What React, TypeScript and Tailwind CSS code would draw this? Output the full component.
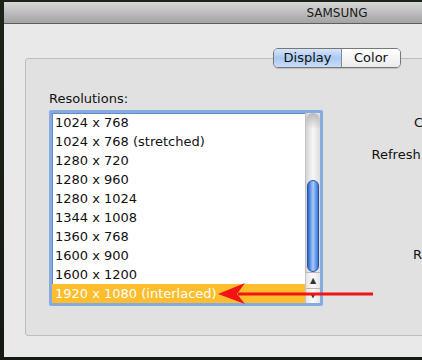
import React from 'react';

const RESOLUTIONS = [
  '1024 x 768',
  '1024 x 768 (stretched)',
  '1280 x 720',
  '1280 x 960',
  '1280 x 1024',
  '1344 x 1008',
  '1360 x 768',
  '1600 x 900',
  '1600 x 1200',
  '1920 x 1080 (interlaced)',
];

const SELECTED = 9;

const Scrollbar: React.FC = () => (
  <div className="flex w-[15px] shrink-0 flex-col border-l border-[#c4c4c4]">
    {/* track */}
    <div className="relative flex-1 bg-gradient-to-r from-[#d4d4d4] via-[#f7f7f7] to-[#dcdcdc]">
      <div className="h-[16px] rounded-t-[7px] bg-gradient-to-b from-[#b9b9b9] to-transparent" />
      <div className="absolute left-[1px] right-[1px] top-[67px] h-[92px] rounded-[7px] border border-[#2553a8] bg-gradient-to-r from-[#2a63cc] via-[#a5ccf7] to-[#3c75da]" />
    </div>
    {/* arrows */}
    <div className="flex h-[16px] items-center justify-center border-t border-[#b8b8b8] bg-gradient-to-r from-[#e6e6e6] via-[#fafafa] to-[#e6e6e6] text-[8px] leading-none text-[#333]">
      ▲
    </div>
    <div className="flex h-[15px] items-center justify-center border-t border-[#b8b8b8] bg-gradient-to-r from-[#e6e6e6] via-[#fafafa] to-[#e6e6e6] text-[5px] leading-none text-[#333]">
      ▼
    </div>
  </div>
);

export default function App() {
  return (
    <div
      className="relative h-[360px] w-[422px] overflow-hidden bg-gradient-to-b from-[#1c2418] to-[#141a12] pl-[4px] pt-[2px] text-[13px] leading-[16px] text-[#111]"
      style={{ fontFamily: '"DejaVu Sans", "Noto Sans", sans-serif' }}
    >
      <div className="flex h-[355px] w-[666px] flex-col bg-[#e9e9e9]">
        {/* title bar */}
        <div className="flex h-[22px] items-center justify-center border-b border-[#5e5e5e] bg-gradient-to-b from-[#d8d8d8] to-[#a3a3a3] text-[12px] text-[#1a1a1a]">
          SAMSUNG
        </div>

        {/* tabs */}
        <div className="relative z-10 flex justify-center pt-[24px]">
          <div className="flex h-[20px] overflow-hidden rounded-[5px] border border-[#777] shadow-[0_1px_1px_rgba(0,0,0,0.15)]">
            <div className="flex w-[68px] items-center justify-center border-r border-[#8a8a8a] bg-gradient-to-b from-[#d6e6fa] via-[#a9c9f2] to-[#c9defa]">
              Display
            </div>
            <div className="flex w-[58px] items-center justify-center bg-gradient-to-b from-[#ffffff] to-[#ebebeb]">
              Color
            </div>
          </div>
        </div>

        {/* group box */}
        <div className="mx-[21px] -mt-[10px] h-[278px] rounded-[3px] border border-[#bdbdbd] bg-[#e1e1e1] pl-[23px] pt-[32px]">
          <div>Resolutions:</div>
          <div className="mt-[3px] flex">
            <div className="flex h-[196px] w-[274px] rounded-[2px] border-[3px] border-[#86abe0] bg-white shadow-[inset_0_0_0_1px_#5f8bcc]">
              <div className="flex flex-1 flex-col">
                {RESOLUTIONS.map((r, i) => (
                  <div
                    key={r}
                    className={`flex h-[19px] items-center pl-[3px] ${
                      i === SELECTED ? 'bg-[#fdbd2c] text-white' : ''
                    }`}
                  >
                    {r}
                  </div>
                ))}
              </div>
              <Scrollbar />
            </div>
            <div className="flex w-[136px] flex-col items-end pt-[5px]">
              <div>Colors:</div>
              <div className="mt-[16px]">Refresh Rate:</div>
              <div className="mt-[84px]">Resize:</div>
            </div>
          </div>
        </div>
      </div>

      {/* red annotation arrow */}
      <svg className="pointer-events-none absolute left-0 top-0" width="422" height="360">
        <line x1="238" y1="294" x2="373" y2="294" stroke="#f01414" strokeWidth="3" />
        <polygon points="218,294 245,283 237,294 245,304" fill="#f01414" />
      </svg>
    </div>
  );
}
